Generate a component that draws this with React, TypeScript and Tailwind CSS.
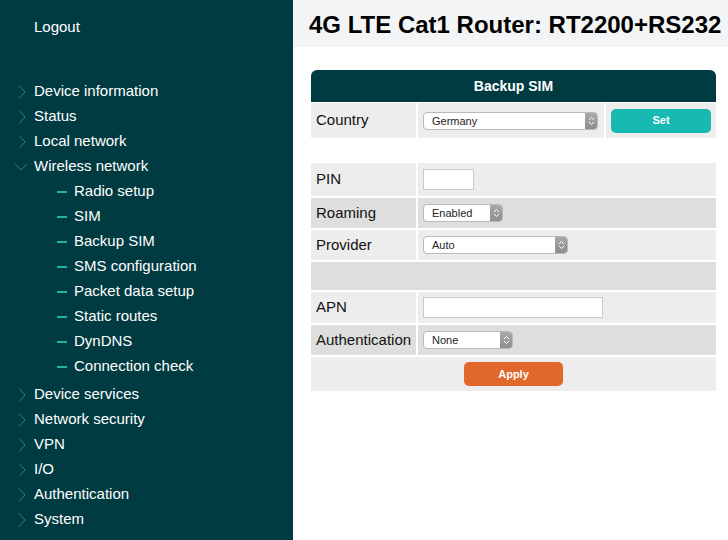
import React from 'react';

const font = { fontFamily: '"Liberation Sans", Arial, Helvetica, sans-serif' };

const topItems = ['Device information', 'Status', 'Local network'];
const subItems = [
  'Radio setup',
  'SIM',
  'Backup SIM',
  'SMS configuration',
  'Packet data setup',
  'Static routes',
  'DynDNS',
  'Connection check',
];
const bottomItems = ['Device services', 'Network security', 'VPN', 'I/O', 'Authentication', 'System'];

function ChevronRight() {
  return (
    <svg width="10" height="16" viewBox="0 0 10 16" className="shrink-0">
      <path d="M2 1.5 L8 8 L2 14.5" fill="none" stroke="#1e8783" strokeWidth="1" />
    </svg>
  );
}

function ChevronDown() {
  return (
    <svg width="14" height="10" viewBox="0 0 14 10" className="shrink-0">
      <path d="M1 2 L7 8 L13 2" fill="none" stroke="#1e8783" strokeWidth="1" />
    </svg>
  );
}

function NavItem({ label }: { label: string }) {
  return (
    <div className="flex items-center h-[25px]">
      <div className="w-[34px] flex justify-end pr-[7px]">
        <ChevronRight />
      </div>
      <span>{label}</span>
    </div>
  );
}

function Select({ value, width }: { value: string; width: number }) {
  return (
    <div
      className="flex items-stretch h-[18px] bg-white border border-[#b9b9b9] rounded-[4px] overflow-hidden"
      style={{ width }}
    >
      <span className="flex-1 pl-[8px] text-[11px] leading-[16px] text-[#222]">{value}</span>
      <div className="w-[12px] bg-gradient-to-b from-[#a9a9a9] to-[#8e8e8e] flex items-center justify-center">
        <svg width="7" height="10" viewBox="0 0 7 10">
          <path d="M1 4 L3.5 1.5 L6 4 M1 6 L3.5 8.5 L6 6" fill="none" stroke="#fff" strokeWidth="1" />
        </svg>
      </div>
    </div>
  );
}

function Row({
  label,
  bg,
  h,
  children,
}: {
  label: string;
  bg: string;
  h: string;
  children?: React.ReactNode;
}) {
  return (
    <div className={`flex gap-[2px] ${h}`}>
      <div className={`w-[105px] ${bg} flex items-center pl-[5px] text-[15px] text-[#111]`}>{label}</div>
      <div className={`flex-1 ${bg} flex items-center pl-[5px]`}>{children}</div>
    </div>
  );
}

export default function App() {
  return (
    <div className="flex w-[728px] h-[540px] overflow-hidden bg-white" style={font}>
      <aside className="w-[293px] shrink-0 bg-[#003b41] text-white text-[15px]">
        <div className="h-[25px] mt-[15px] flex items-center pl-[34px]">Logout</div>
        <div className="mt-[39px]">
          {topItems.map((t) => (
            <NavItem key={t} label={t} />
          ))}
          <div className="flex items-center h-[25px]">
            <div className="w-[34px] flex justify-end pr-[6px]">
              <ChevronDown />
            </div>
            <span>Wireless network</span>
          </div>
          <div className="mb-[3px]">
            {subItems.map((s) => (
              <div key={s} className="flex items-center h-[25px] pl-[57px]">
                <span className="w-[10px] h-[2px] bg-[#22b3a8] mr-[7px]" />
                <span>{s}</span>
              </div>
            ))}
          </div>
          {bottomItems.map((t) => (
            <NavItem key={t} label={t} />
          ))}
        </div>
      </aside>

      <main className="flex-1">
        <header className="h-[47px] bg-[#f3f4f6] flex items-center pl-[16px]">
          <h1 className="text-[24px] font-bold text-black leading-none pt-[2px]">4G LTE Cat1 Router: RT2200+RS232</h1>
        </header>

        <div className="ml-[18px] mt-[23px] w-[405px] flex flex-col gap-[1px]">
          <div className="h-[32px] bg-[#003b41] rounded-t-[6px] flex items-center justify-center text-white font-bold text-[14px]">
            Backup SIM
          </div>

          <div className="flex gap-[2px] h-[35px]">
            <div className="w-[105px] bg-[#ededed] flex items-center pl-[5px] text-[15px] text-[#111]">Country</div>
            <div className="w-[186px] bg-[#ededed] flex items-center pl-[5px]">
              <Select value="Germany" width={175} />
            </div>
            <div className="flex-1 bg-[#ededed] flex items-center pl-[5px]">
              <button className="w-[100px] h-[24px] rounded-[5px] bg-[#17b9b0] text-white text-[11px] font-bold">
                Set
              </button>
            </div>
          </div>

          <div className="h-[23px]" />

          <div className="flex flex-col gap-[2px]">
            <Row label="PIN" bg="bg-[#ededed]" h="h-[33px]">
              <div className="w-[51px] h-[21px] bg-white border border-[#c9c9c9]" />
            </Row>
            <Row label="Roaming" bg="bg-[#dedede]" h="h-[30px]">
              <Select value="Enabled" width={80} />
            </Row>
            <Row label="Provider" bg="bg-[#ededed]" h="h-[30px]">
              <Select value="Auto" width={145} />
            </Row>
            <div className="h-[28px] bg-[#dedede]" />
            <Row label="APN" bg="bg-[#ededed]" h="h-[31px]">
              <div className="w-[180px] h-[21px] bg-white border border-[#c9c9c9]" />
            </Row>
            <Row label="Authentication" bg="bg-[#dedede]" h="h-[30px]">
              <Select value="None" width={90} />
            </Row>
            <div className="h-[34px] bg-[#ededed] flex items-center justify-center">
              <button className="w-[99px] h-[24px] rounded-[5px] bg-[#e1672a] text-white text-[11px] font-bold">
                Apply
              </button>
            </div>
          </div>
        </div>
      </main>
    </div>
  );
}
